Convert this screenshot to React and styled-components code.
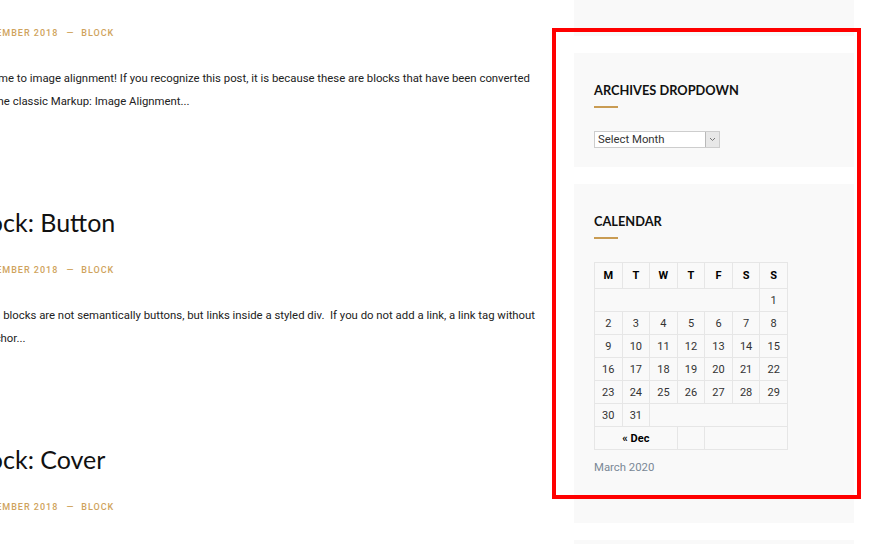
import React from "react";
import styled, { createGlobalStyle } from "styled-components";

const Global = createGlobalStyle`
  html, body { margin: 0; padding: 0; background: #fff; }
  body { font-family: Roboto, "Liberation Sans", sans-serif; overflow: hidden; }
  * { box-sizing: border-box; }
`;

const Page = styled.div`
  display: flex;
  align-items: flex-start;
  margin: -31px 0 0 -33px;
  gap: 32px;
`;

const Main = styled.main`
  flex: 0 0 575px;
`;

const Post = styled.article`
  padding-bottom: 93px;
`;

const PostTitle = styled.h2`
  margin: 0;
  font-family: Lato, "Open Sans", sans-serif;
  font-weight: 400;
  font-size: 25px;
  line-height: 32px;
  color: #111;
`;

const Meta = styled.div`
  margin-top: 26px;
  font-size: 9px;
  line-height: 13px;
  font-weight: 500;
  letter-spacing: 1px;
  text-transform: uppercase;
  color: #cfa35c;
  white-space: nowrap;
`;

const Dash = styled.span`
  margin: 0 3.5px 0 5px;
`;

const Excerpt = styled.p`
  margin: 27px 0 0;
  font-size: 11.35px;
  line-height: 23px;
  color: #222;
`;

const Sidebar = styled.aside`
  flex: 0 0 280px;
  display: flex;
  flex-direction: column;
  gap: 17px;
`;

const Widget = styled.section`
  background: #f9f9f9;
  padding: 27px 20px ${(p) => p.$pb ?? 19}px;
  min-height: ${(p) => p.$minH ?? 0}px;
`;

const WidgetTitle = styled.h3`
  margin: 0;
  font-family: Lato, "Open Sans", sans-serif;
  font-weight: 700;
  font-size: 12.8px;
  line-height: 20px;
  color: #111;
  text-transform: uppercase;
  &::after {
    content: "";
    display: block;
    width: 24px;
    height: 2px;
    margin-top: 6px;
    background: #c99c53;
  }
`;

const SelectWrap = styled.div`
  margin-top: 23px;
  display: flex;
  width: 126px;
  height: 17px;
  border: 1px solid #cdcdcd;
  background: #fff;
`;

const NativeSelect = styled.select`
  flex: 1;
  min-width: 0;
  appearance: none;
  -webkit-appearance: none;
  border: 0;
  outline: 0;
  background: transparent;
  padding: 0 0 0 3px;
  margin: 0;
  font-family: Roboto, "Liberation Sans", sans-serif;
  font-size: 11.35px;
  line-height: 15px;
  height: 15px;
  color: #333;
`;

const Arrow = styled.span`
  flex: 0 0 14px;
  display: flex;
  align-items: center;
  justify-content: center;
  background: #e8e8e8;
  border-left: 1px solid #b9b9b9;
`;

const Calendar = styled.table`
  margin-top: 23px;
  width: 194px;
  table-layout: fixed;
  border-collapse: collapse;
  font-size: 11px;
  color: #333;
`;

const Caption = styled.caption`
  caption-side: bottom;
  text-align: left;
  padding-top: 7px;
  font-size: 11.35px;
  line-height: 20px;
  color: #7a8896;
`;

const Th = styled.th`
  height: 26px;
  border: 1px solid #e6e6e6;
  font-weight: 700;
  color: #000;
  text-align: center;
  padding: 0;
`;

const Td = styled.td`
  height: 23px;
  border: 1px solid #e6e6e6;
  text-align: center;
  padding: 0;
  font-weight: ${(p) => (p.$bold ? 700 : 400)};
  color: ${(p) => (p.$bold ? "#000" : "#333")};
`;

const Highlight = styled.div`
  position: absolute;
  left: 552px;
  top: 28px;
  width: 309px;
  height: 471px;
  border: 4px solid #ff0000;
  pointer-events: none;
`;

const posts = [
  {
    title: "Block: Image",
    date: "2 December 2018",
    text: "Welcome to image alignment! If you recognize this post, it is because these are blocks that have been converted from the classic Markup: Image Alignment...",
  },
  {
    title: "Block: Button",
    date: "2 December 2018",
    text: "Button blocks are not semantically buttons, but links inside a styled div.\u00a0 If you do not add a link, a link tag without an anchor...",
  },
  {
    title: "Block: Cover",
    date: "2 December 2018",
    text: "",
  },
];

const days = ["M", "T", "W", "T", "F", "S", "S"];
const weeks = [
  [null, null, null, null, null, null, 1],
  [2, 3, 4, 5, 6, 7, 8],
  [9, 10, 11, 12, 13, 14, 15],
  [16, 17, 18, 19, 20, 21, 22],
  [23, 24, 25, 26, 27, 28, 29],
  [30, 31, null, null, null, null, null],
];

function Week({ days }) {
  const cells = [];
  let pad = 0;
  days.forEach((d, i) => {
    if (d === null) {
      pad++;
      if (i === days.length - 1 || days[i + 1] !== null) {
        cells.push(<Td key={"p" + i} colSpan={pad} />);
        pad = 0;
      }
    } else {
      cells.push(<Td key={i}>{d}</Td>);
    }
  });
  return <tr>{cells}</tr>;
}

export default function App() {
  return (
    <>
      <Global />
      <Page>
        <Main>
          {posts.map((p) => (
            <Post key={p.title}>
              <PostTitle>{p.title}</PostTitle>
              <Meta>
                {p.date} <Dash>—</Dash> Block
              </Meta>
              {p.text && <Excerpt>{p.text}</Excerpt>}
            </Post>
          ))}
        </Main>
        <Sidebar>
          <Widget $minH={67} />
          <Widget>
            <WidgetTitle>Archives Dropdown</WidgetTitle>
            <SelectWrap>
              <NativeSelect defaultValue="">
                <option value="">Select Month</option>
                <option>March 2020</option>
                <option>December 2018</option>
              </NativeSelect>
              <Arrow>
                <svg width="7" height="5" viewBox="0 0 7 5">
                  <path d="M1 1 L3.5 3.5 L6 1" fill="none" stroke="#777" strokeWidth="1" />
                </svg>
              </Arrow>
            </SelectWrap>
          </Widget>
          <Widget $pb={46}>
            <WidgetTitle>Calendar</WidgetTitle>
            <Calendar>
              <Caption>March 2020</Caption>
              <thead>
                <tr>
                  {days.map((d, i) => (
                    <Th key={i}>{d}</Th>
                  ))}
                </tr>
              </thead>
              <tbody>
                {weeks.map((w, i) => (
                  <Week key={i} days={w} />
                ))}
              </tbody>
              <tfoot>
                <tr>
                  <Td colSpan={3} $bold>« Dec</Td>
                  <Td />
                  <Td colSpan={3} />
                </tr>
              </tfoot>
            </Calendar>
          </Widget>
          <Widget $minH={100} />
        </Sidebar>
      </Page>
      <Highlight />
    </>
  );
}
